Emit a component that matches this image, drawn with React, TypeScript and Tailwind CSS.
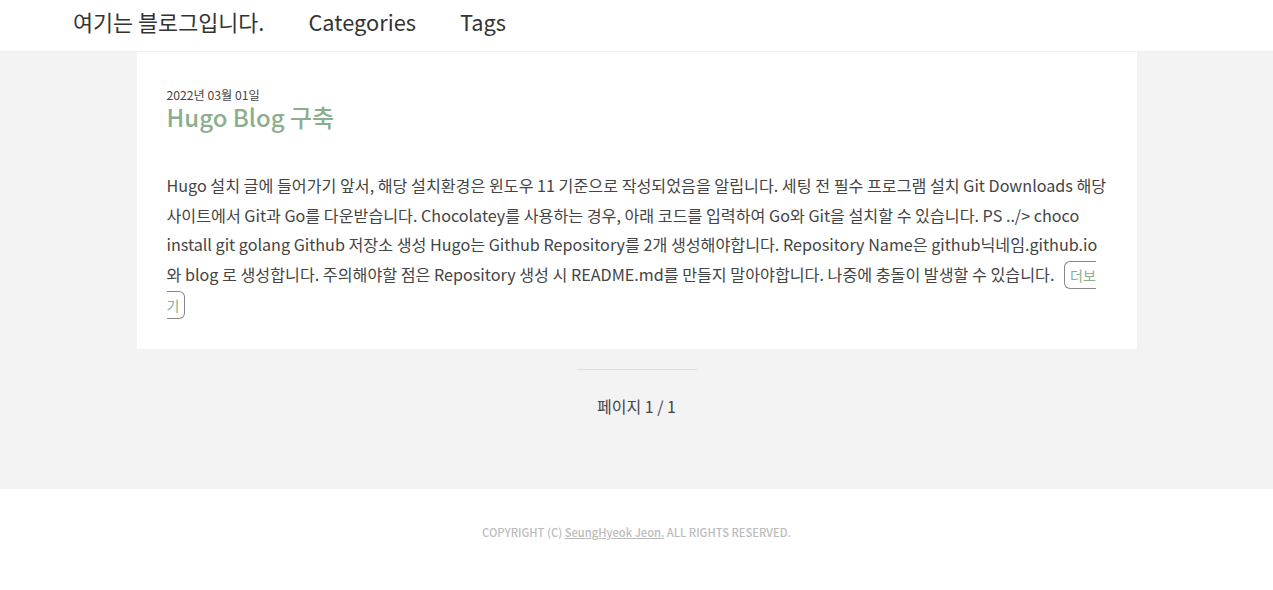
import React from "react";

const font = { fontFamily: '"Noto Sans CJK KR", "Noto Sans", sans-serif' };

export default function App() {
    return (
        <div className="min-h-[590px] bg-white text-[#444]" style={font}>
            {/* Header */}
            <header className="h-[52px] border-b border-[#eeeeee] bg-white">
                <nav className="flex items-start pt-[7px] pl-[73px] gap-[44px] text-[21.8px] leading-[30px] text-[#333]">
                    <a>여기는 블로그입니다.</a>
                    <a>Categories</a>
                    <a>Tags</a>
                </nav>
            </header>

            {/* Main */}
            <main className="bg-[#f3f3f3] pb-[72px]">
                <article className="mx-auto w-[1000px] bg-white px-[30px] pt-[35px] pb-[28px]">
                    <p className="text-[12.2px] leading-[17px] text-[#444]">2022년 03월 01일</p>
                    <h2 className="text-[24px] leading-[26px] font-medium text-[#8cae8c]">
                        Hugo Blog 구축
                    </h2>
                    <p className="mt-[41px] text-[16.15px] leading-[29.6px] text-[#444]">
                        Hugo 설치 글에 들어가기 앞서, 해당 설치환경은 윈도우 11 기준으로 작성되었음을 알립니다. 세팅 전 필수 프로그램 설치 Git Downloads 해당 사이트에서 Git과 Go를 다운받습니다. Chocolatey를 사용하는 경우, 아래 코드를 입력하여 Go와 Git을 설치할 수 있습니다. PS ../&gt; choco install git golang Github 저장소 생성 Hugo는 Github Repository를 2개 생성해야합니다. Repository Name은 github닉네임.github.io와 blog 로 생성합니다. 주의해야할 점은 Repository 생성 시 README.md를 만들지 말아야합니다. 나중에 충돌이 발생할 수 있습니다.{" "}
                        <a className="ml-[6px] rounded-[6px] border border-[#888] px-[5px] py-[3px] text-[14px] text-[#8cae8c]">
                            더보기
                        </a>
                    </p>
                </article>

                {/* Pagination */}
                <div className="flex flex-col items-center pt-[20px]">
                    <div className="w-[120px] border-t border-[#dddddd]" />
                    <p className="mt-[25px] text-[16px] leading-[22px] text-[#444]">페이지 1 / 1</p>
                </div>
            </main>

            {/* Footer */}
            <footer className="flex justify-center pt-[35px] pb-[40px] bg-white">
                <p className="text-[11.2px] font-medium text-[#bbbbbb]">
                    COPYRIGHT (C) <a className="underline">SeungHyeok Jeon.</a> ALL RIGHTS RESERVED.
                </p>
            </footer>
        </div>
    );
}
